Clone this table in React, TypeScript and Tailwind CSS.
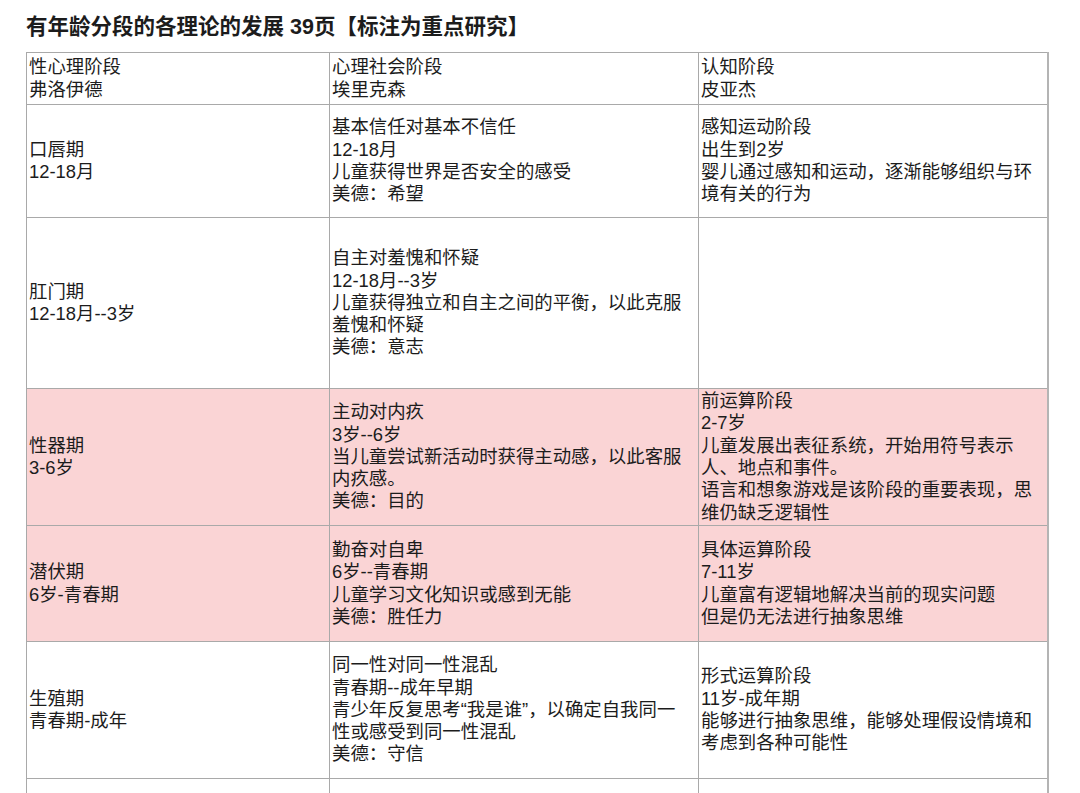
const rows: { h: string; pink?: boolean; cells: string[][] }[] = [
  {
    h: "h-[52px]",
    cells: [
      ["性心理阶段", "弗洛伊德"],
      ["心理社会阶段", "埃里克森"],
      ["认知阶段", "皮亚杰"],
    ],
  },
  {
    h: "h-[113px]",
    cells: [
      ["口唇期", "12-18月"],
      ["基本信任对基本不信任", "12-18月", "儿童获得世界是否安全的感受", "美德：希望"],
      ["感知运动阶段", "出生到2岁", "婴儿通过感知和运动，逐渐能够组织与环", "境有关的行为"],
    ],
  },
  {
    h: "h-[171px]",
    cells: [
      ["肛门期", "12-18月--3岁"],
      ["自主对羞愧和怀疑", "12-18月--3岁", "儿童获得独立和自主之间的平衡，以此克服", "羞愧和怀疑", "美德：意志"],
      [],
    ],
  },
  {
    h: "h-[137px]",
    pink: true,
    cells: [
      ["性器期", "3-6岁"],
      ["主动对内疚", "3岁--6岁", "当儿童尝试新活动时获得主动感，以此客服", "内疚感。", "美德：目的"],
      ["前运算阶段", "2-7岁", "儿童发展出表征系统，开始用符号表示", "人、地点和事件。", "语言和想象游戏是该阶段的重要表现，思", "维仍缺乏逻辑性"],
    ],
  },
  {
    h: "h-[116px]",
    pink: true,
    cells: [
      ["潜伏期", "6岁-青春期"],
      ["勤奋对自卑", "6岁--青春期", "儿童学习文化知识或感到无能", "美德：胜任力"],
      ["具体运算阶段", "7-11岁", "儿童富有逻辑地解决当前的现实问题", "但是仍无法进行抽象思维"],
    ],
  },
  {
    h: "h-[137px]",
    cells: [
      ["生殖期", "青春期-成年"],
      ["同一性对同一性混乱", "青春期--成年早期", "青少年反复思考“我是谁”，以确定自我同一", "性或感受到同一性混乱", "美德：守信"],
      ["形式运算阶段", "11岁-成年期", "能够进行抽象思维，能够处理假设情境和", "考虑到各种可能性"],
    ],
  },
  { h: "h-[40px]", cells: [[], [], []] },
];

export default function App() {
  return (
    <div className="min-h-screen bg-white px-[26px] pt-[13px] font-['Liberation_Sans','Noto_Sans_CJK_SC',sans-serif] text-[#1c1c1c]">
      <h1 className="text-[21.5px] font-bold leading-[28px] mb-[11px] whitespace-nowrap">
        有年龄分段的各理论的发展 39页【标注为重点研究】
      </h1>
      <table className="table-fixed border-collapse w-[1021px] text-[18.4px] leading-[22.3px]">
        <colgroup>
          <col className="w-[303px]" />
          <col className="w-[369px]" />
          <col className="w-[349px]" />
        </colgroup>
        <tbody>
          {rows.map((row, i) => (
            <tr key={i} className={`${row.h} ${row.pink ? "bg-[#fad4d5]" : "bg-white"}`}>
              {row.cells.map((lines, j) => (
                <td
                  key={j}
                  className={`border border-[#a9a9a9] align-middle px-[2px] py-0 whitespace-nowrap overflow-hidden ${
                    j === 2 ? "border-r-2 border-r-[#b4b4b4]" : ""
                  }`}
                >
                  {lines.map((l, k) => (
                    <div key={k}>{l}</div>
                  ))}
                </td>
              ))}
            </tr>
          ))}
        </tbody>
      </table>
    </div>
  );
}
